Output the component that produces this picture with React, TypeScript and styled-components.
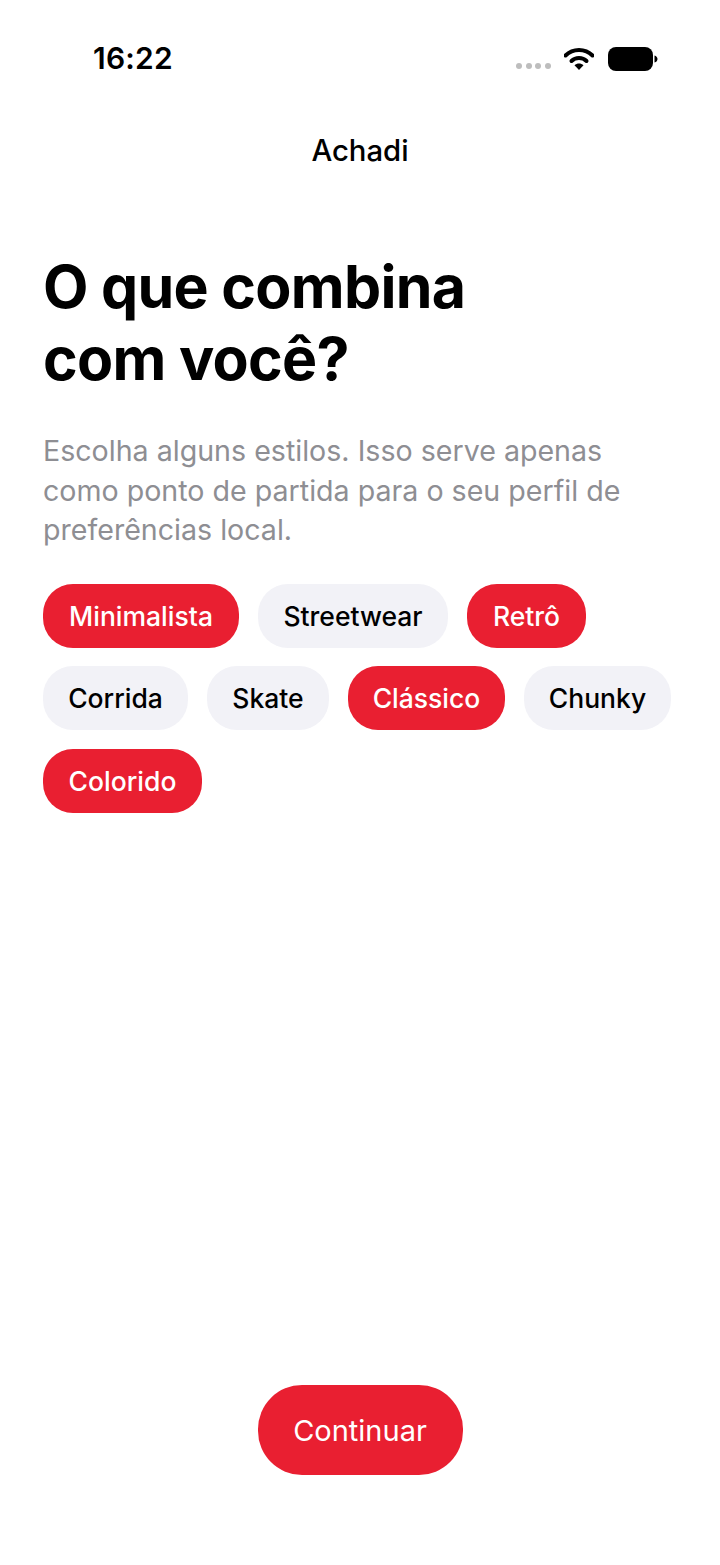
import React from "react";
import styled, { createGlobalStyle } from "styled-components";

const GlobalStyle = createGlobalStyle`
  html, body {
    margin: 0;
    padding: 0;
    background: #ffffff;
  }
  body {
    font-family: Inter, "Noto Sans", sans-serif;
    color: #000000;
  }
`;

const Screen = styled.div`
  width: 720px;
  height: 1565px;
  display: flex;
  flex-direction: column;
  overflow: hidden;
`;

const StatusBar = styled.div`
  height: 133px;
  padding: 0 62px 0 93px;
  box-sizing: border-box;
  display: flex;
  justify-content: space-between;
  align-items: flex-start;
`;

const Clock = styled.div`
  margin-top: 40px;
  font-size: 30px;
  line-height: 36px;
  font-weight: 600;
  letter-spacing: 0.2px;
`;

const StatusIcons = styled.div`
  margin-top: 47px;
  display: flex;
  align-items: flex-start;
`;

const Signal = styled.div`
  margin: 16px 13px 0 0;
  display: flex;
  gap: 3.6px;
`;

const Dot = styled.span`
  width: 6px;
  height: 6px;
  border-radius: 50%;
  background: #bdbdbd;
`;

const Wifi = styled.svg`
  width: 30px;
  height: 23px;
  margin-right: 14px;
`;

const Battery = styled.svg`
  width: 50px;
  height: 24px;
`;

const NavTitle = styled.div`
  text-align: center;
  font-size: 29.3px;
  line-height: 36px;
  font-weight: 500;
`;

const Content = styled.div`
  flex: 1;
  padding: 82px 43px 0;
`;

const Heading = styled.h1`
  margin: 0;
  font-size: 59px;
  line-height: 72px;
  font-weight: 700;
  letter-spacing: -0.7px;
`;

const Lead = styled.p`
  margin: 36px 0 0;
  width: 610px;
  font-size: 28.6px;
  line-height: 39.5px;
  font-weight: 400;
  color: #8e8e93;
`;

const Chips = styled.div`
  margin-top: 34px;
  display: flex;
  flex-wrap: wrap;
  gap: 18.5px 19px;
`;

const Chip = styled.div<{ $active?: boolean; $width: number }>`
  width: ${(p) => p.$width}px;
  height: 64px;
  border-radius: 30px;
  display: flex;
  align-items: center;
  justify-content: center;
  font-size: 26.5px;
  font-weight: 500;
  background: ${(p) => (p.$active ? "#e91f31" : "#f2f2f7")};
  color: ${(p) => (p.$active ? "#ffffff" : "#000000")};
`;

const Footer = styled.div`
  display: flex;
  justify-content: center;
  padding-bottom: 90px;
`;

const ContinueButton = styled.button`
  width: 205px;
  height: 90px;
  padding: 0;
  border: 0;
  border-radius: 44px;
  background: #e91f31;
  color: #ffffff;
  font-family: inherit;
  font-size: 29px;
  font-weight: 400;
`;

const styles = [
  { label: "Minimalista", width: 196, active: true },
  { label: "Streetwear", width: 190, active: false },
  { label: "Retrô", width: 119, active: true },
  { label: "Corrida", width: 145, active: false },
  { label: "Skate", width: 122, active: false },
  { label: "Clássico", width: 157, active: true },
  { label: "Chunky", width: 147, active: false },
  { label: "Colorido", width: 159, active: true },
];

export default function App() {
  return (
    <Screen>
      <GlobalStyle />
      <StatusBar>
        <Clock>16:22</Clock>
        <StatusIcons>
          <Signal>
            <Dot />
            <Dot />
            <Dot />
            <Dot />
          </Signal>
          <Wifi viewBox="0 0 30 23">
            <path d="M1.5 8.5C9 1 21 1 28.5 8.5" fill="none" stroke="#000" strokeWidth="4" strokeLinecap="round" />
            <path d="M7.5 14C11.5 10 18.5 10 22.5 14" fill="none" stroke="#000" strokeWidth="4" strokeLinecap="round" />
            <path d="M10.5 18.2C13 15.8 17 15.8 19.5 18.2L15 23Z" fill="#000" />
          </Wifi>
          <Battery viewBox="0 0 50 24">
            <rect x="0" y="0" width="45" height="24" rx="8" fill="#000" />
            <path d="M46.5 8.5C48.5 9 49.5 10.5 49.5 12C49.5 13.5 48.5 15 46.5 15.5Z" fill="#000" />
          </Battery>
        </StatusIcons>
      </StatusBar>
      <NavTitle>Achadi</NavTitle>
      <Content>
        <Heading>
          O que combina
          <br />
          com você?
        </Heading>
        <Lead>Escolha alguns estilos. Isso serve apenas como ponto de partida para o seu perfil de preferências local.</Lead>
        <Chips>
          {styles.map((s) => (
            <Chip key={s.label} $active={s.active} $width={s.width}>
              {s.label}
            </Chip>
          ))}
        </Chips>
      </Content>
      <Footer>
        <ContinueButton>Continuar</ContinueButton>
      </Footer>
    </Screen>
  );
}
